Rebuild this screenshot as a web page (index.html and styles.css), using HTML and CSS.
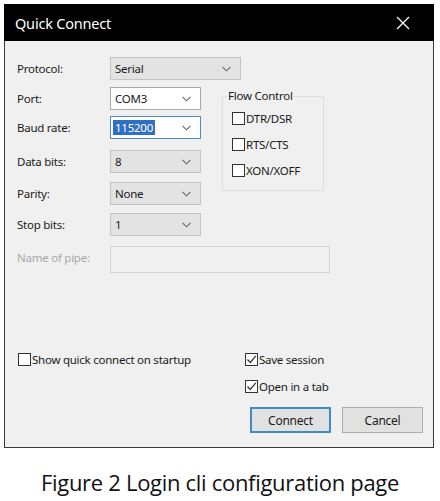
FILE: index.html
```html
<!DOCTYPE html>
<html>
<head>
<meta charset="utf-8">
<link rel="stylesheet" href="styles.css">
</head>
<body>
<div class="window">
  <div class="titlebar">
    <span class="title">Quick Connect</span>
    <svg class="close" width="14" height="14" viewBox="0 0 14 14"><path d="M1 1L13 13M13 1L1 13" stroke="#fff" stroke-width="1.3" fill="none"/></svg>
  </div>
  <div class="content">
    <div class="form">
      <label class="lbl r1">Protocol:</label>
      <div class="sel grey wide r1"><span>Serial</span><svg class="chev" width="9" height="6" viewBox="0 0 9 6"><path d="M0.5 0.8L4.5 4.8L8.5 0.8" stroke="#666" stroke-width="1.1" fill="none"/></svg></div>

      <label class="lbl r2">Port:</label>
      <div class="sel white r2"><span>COM3</span><svg class="chev" width="9" height="6" viewBox="0 0 9 6"><path d="M0.5 0.8L4.5 4.8L8.5 0.8" stroke="#666" stroke-width="1.1" fill="none"/></svg></div>

      <fieldset class="group">
        <legend>Flow Control</legend>
        <div class="chk"><span class="box"></span><span>DTR/DSR</span></div>
        <div class="chk"><span class="box"></span><span>RTS/CTS</span></div>
        <div class="chk"><span class="box"></span><span>XON/XOFF</span></div>
      </fieldset>

      <label class="lbl r3">Baud rate:</label>
      <div class="sel white focus r3"><span class="hl">115200</span><svg class="chev" width="9" height="6" viewBox="0 0 9 6"><path d="M0.5 0.8L4.5 4.8L8.5 0.8" stroke="#666" stroke-width="1.1" fill="none"/></svg></div>

      <label class="lbl r4">Data bits:</label>
      <div class="sel grey r4"><span>8</span><svg class="chev" width="9" height="6" viewBox="0 0 9 6"><path d="M0.5 0.8L4.5 4.8L8.5 0.8" stroke="#666" stroke-width="1.1" fill="none"/></svg></div>

      <label class="lbl r5">Parity:</label>
      <div class="sel grey r5"><span>None</span><svg class="chev" width="9" height="6" viewBox="0 0 9 6"><path d="M0.5 0.8L4.5 4.8L8.5 0.8" stroke="#666" stroke-width="1.1" fill="none"/></svg></div>

      <label class="lbl r6">Stop bits:</label>
      <div class="sel grey r6"><span>1</span><svg class="chev" width="9" height="6" viewBox="0 0 9 6"><path d="M0.5 0.8L4.5 4.8L8.5 0.8" stroke="#666" stroke-width="1.1" fill="none"/></svg></div>

      <label class="lbl disabled r7">Name of pipe:</label>
      <div class="pipe r7"></div>
    </div>

    <div class="bottom">
      <div class="chk startup"><span class="box"></span><span>Show quick connect on startup</span></div>
      <div class="right">
        <div class="chk"><span class="box checked"><svg width="11" height="11" viewBox="0 0 11 11"><path d="M1.5 5.5L4.3 8.5L9.8 1.8" stroke="#333" stroke-width="1.2" fill="none"/></svg></span><span>Save session</span></div>
        <div class="chk"><span class="box checked"><svg width="11" height="11" viewBox="0 0 11 11"><path d="M1.5 5.5L4.3 8.5L9.8 1.8" stroke="#333" stroke-width="1.2" fill="none"/></svg></span><span>Open in a tab</span></div>
        <div class="buttons">
          <div class="btn primary">Connect</div>
          <div class="btn">Cancel</div>
        </div>
      </div>
    </div>
  </div>
</div>
<p class="caption">Figure 2 Login cli configuration page</p>
</body>
</html>
```
FILE: styles.css
```css
html, body {
  margin: 0;
  padding: 0;
  background: #ffffff;
}
body {
  width: 440px;
  height: 501px;
  overflow: hidden;
  font-family: "Noto Sans", "Open Sans", sans-serif;
}
.window {
  margin: 4px 0 0 4px;
  width: 430px;
  box-sizing: border-box;
}
.titlebar {
  height: 37px;
  background: #000;
  display: flex;
  align-items: center;
  justify-content: space-between;
  padding: 0 24px 0 11px;
}
.title {
  color: #fff;
  font-size: 14.5px;
  letter-spacing: -0.2px;
}
.close {
  display: block;
}
.content {
  background: #f0f0f0;
  border: 1px solid #3a3a3a;
  border-top: none;
  height: 407px;
  box-sizing: border-box;
  padding: 16px 0 0 12px;
  font-size: 11.5px;
  color: #1a1a1a;
  letter-spacing: -0.25px;
}
.form {
  display: grid;
  grid-template-columns: 93px 112px 104px;
  grid-template-rows: 30px 29px 34px 32px 31px 33px 27px;
  align-items: start;
}
.lbl {
  grid-column: 1;
  height: 23px;
  display: flex;
  align-items: center;
}
.disabled {
  color: #a8a8a8;
}
.r1 { grid-row: 1; }
.r2 { grid-row: 2; }
.r3 { grid-row: 3; }
.r4 { grid-row: 4; }
.r5 { grid-row: 5; }
.r6 { grid-row: 6; }
.r7 { grid-row: 7; }
.sel {
  grid-column: 2;
  width: 91px;
  height: 23px;
  box-sizing: border-box;
  border: 1px solid #b4b4b4;
  display: flex;
  align-items: center;
  justify-content: space-between;
  padding: 0 9px 0 4px;
}
.sel.wide {
  grid-column: 2 / 4;
  width: 131px;
  background: #e3e3e3;
  border-color: #c4c4c4;
}
.sel.grey {
  background: #e3e3e3;
  border-color: #c4c4c4;
}
.sel.white {
  background: #fff;
  border-color: #a8a8a8;
}
.sel.focus {
  border-color: #4a8fbe;
  padding-left: 2px;
}
.hl {
  background: #2f6fc4;
  color: #fff;
  padding: 0 2px;
  line-height: 15px;
}
.pipe {
  grid-column: 2 / 4;
  width: 220px;
  height: 27px;
  box-sizing: border-box;
  border: 1px solid #d4d4d4;
  background: #f0f0f0;
}
.group {
  grid-column: 3;
  grid-row: 2 / 6;
  margin: 3px 0 0 0;
  padding: 9px 0 0 9px;
  width: 102px;
  height: 101px;
  box-sizing: border-box;
  border: 1px solid #dedede;
  display: flex;
  flex-direction: column;
  gap: 11px;
}
.group legend {
  padding: 0 1px;
  margin-left: -5px;
  line-height: 12px;
}
.chk {
  display: flex;
  align-items: center;
  gap: 1px;
  height: 15px;
}
.box {
  width: 13px;
  height: 13px;
  box-sizing: border-box;
  border: 1px solid #333;
  background: #fff;
  display: flex;
  align-items: center;
  justify-content: center;
}
.box svg {
  display: block;
}
.bottom {
  margin-top: 79px;
  display: flex;
  padding-left: 1px;
}
.startup {
  width: 227px;
}
.right {
  display: flex;
  flex-direction: column;
  gap: 12px;
}
.buttons {
  display: flex;
  gap: 11px;
  margin-left: 5px;
  margin-top: 1px;
}
.btn {
  width: 81px;
  height: 26px;
  box-sizing: border-box;
  border: 1px solid #adadad;
  background: #e1e1e1;
  display: flex;
  align-items: center;
  justify-content: center;
  font-size: 12px;
}
.btn.primary {
  border: 2px solid #3f8cc4;
}
.caption {
  margin: 19px 0 0 0;
  text-align: center;
  font-family: "Open Sans", "Noto Sans", sans-serif;
  font-size: 22px;
  line-height: 30px;
  color: #111;
  letter-spacing: -0.3px;
}
```
